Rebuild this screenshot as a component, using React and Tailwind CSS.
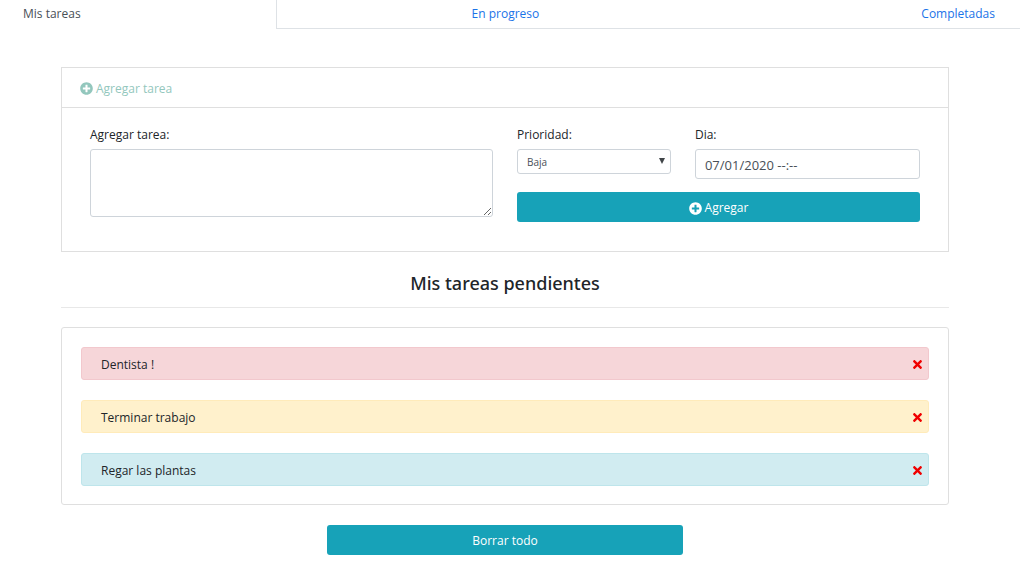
import { useState } from "react";
import { FaPlusCircle, FaTimes } from "react-icons/fa";

const tasks = [
  { id: 1, text: "Dentista !", tone: "bg-[#f6d6d9] border-[#f2c8cd]" },
  { id: 2, text: "Terminar trabajo", tone: "bg-[#fff1cc] border-[#ffebba]" },
  { id: 3, text: "Regar las plantas", tone: "bg-[#d1ecf1] border-[#bee5eb]" },
];

function Tabs() {
  return (
    <nav className="flex h-[29px] text-[12px] leading-7">
      <a href="#mis-tareas" aria-current="page" className="w-[27.2%] border-r border-[#dee2e6] pl-[23px] text-[#495057]">
        Mis tareas
      </a>
      <a href="#en-progreso" className="flex-1 border-b border-[#dee2e6] text-center text-[#1a73e8]">
        En progreso
      </a>
      <a href="#completadas" className="w-[28.1%] border-b border-[#dee2e6] pr-[25px] text-right text-[#1a73e8]">
        Completadas
      </a>
    </nav>
  );
}

function TaskForm() {
  const [text, setText] = useState("");
  const [date, setDate] = useState("07/01/2020 --:--");
  return (
    <section className="border border-[#dfdfdf]">
      <h2 className="flex h-10 items-center gap-[3px] border-b border-[#dfdfdf] px-[18px] pt-0.5 text-[#93c7bd]">
        <FaPlusCircle className="size-[13px]" />
        Agregar tarea
      </h2>
      <form className="grid grid-cols-2 gap-6 px-7 pt-[17px] pb-[29px]" onSubmit={(e) => e.preventDefault()}>
        <div>
          <label htmlFor="tarea" className="mb-1 block leading-5">Agregar tarea:</label>
          <textarea
            id="tarea"
            value={text}
            onChange={(e) => setText(e.target.value)}
            className="block h-[68px] w-full resize rounded-[3px] border border-[#ced4da] px-2.5 py-1 outline-none"
          />
        </div>
        <div className="flex flex-col gap-[13px]">
          <div className="flex gap-6">
            <div className="w-[38.2%]">
              <label htmlFor="prioridad" className="mb-1 block leading-5">Prioridad:</label>
              <div className="relative">
                <select
                  id="prioridad"
                  className="block h-[25px] w-full appearance-none rounded-[3px] border border-[#ced4da] bg-white px-[9px] pt-0.5 text-[10px] text-[#495057] outline-none"
                >
                  <option>Baja</option>
                  <option>Media</option>
                  <option>Alta</option>
                </select>
                <svg viewBox="0 0 6 6" className="pointer-events-none absolute top-[9px] right-1.5 size-1.5 fill-[#404548]" aria-hidden="true">
                  <path d="M0 0h6L3 6z" />
                </svg>
              </div>
            </div>
            <div className="flex-1">
              <label htmlFor="dia" className="mb-1 block leading-5">Dia:</label>
              <input
                id="dia"
                type="text"
                value={date}
                onChange={(e) => setDate(e.target.value)}
                className="block h-[30px] w-full rounded-[3px] border border-[#ced4da] px-[9px] pt-0.5 text-[13px] text-[#495057] outline-none"
              />
            </div>
          </div>
          <button type="submit" className="flex h-[30px] items-center justify-center gap-[3px] rounded-[3px] bg-[#17a2b8] pt-0.5 text-white">
            <FaPlusCircle className="size-[13px]" />
            Agregar
          </button>
        </div>
      </form>
    </section>
  );
}

export default function App() {
  return (
    <div className="bg-white font-['Open_Sans',sans-serif] text-[12px] text-[#212529]">
      <Tabs />
      <main className="pt-[38px] pr-[71px] pb-5 pl-[61px]">
        <TaskForm />
        <h1 className="border-b border-[#e8e8e8] pt-[17px] pb-2.5 text-center font-['Noto_Sans','Open_Sans',sans-serif] text-[18px] leading-7 font-medium">
          Mis tareas pendientes
        </h1>
        <ul className="mt-[19px] flex flex-col gap-5 rounded-[3px] border border-[#dfdfdf] px-[19px] pt-[19px] pb-[18px]">
          {tasks.map((task) => (
            <li key={task.id} className={`flex h-[33px] items-center justify-between rounded-[3px] border pt-0.5 pr-1 pl-[19px] ${task.tone}`}>
              {task.text}
              <button type="button" aria-label={`Eliminar ${task.text}`} className="text-[#f00000]">
                <FaTimes className="size-[13px]" />
              </button>
            </li>
          ))}
        </ul>
        <button type="button" className="mx-auto mt-5 block h-[30px] w-2/5 rounded-[3px] bg-[#17a2b8] pt-0.5 text-white">
          Borrar todo
        </button>
      </main>
    </div>
  );
}
